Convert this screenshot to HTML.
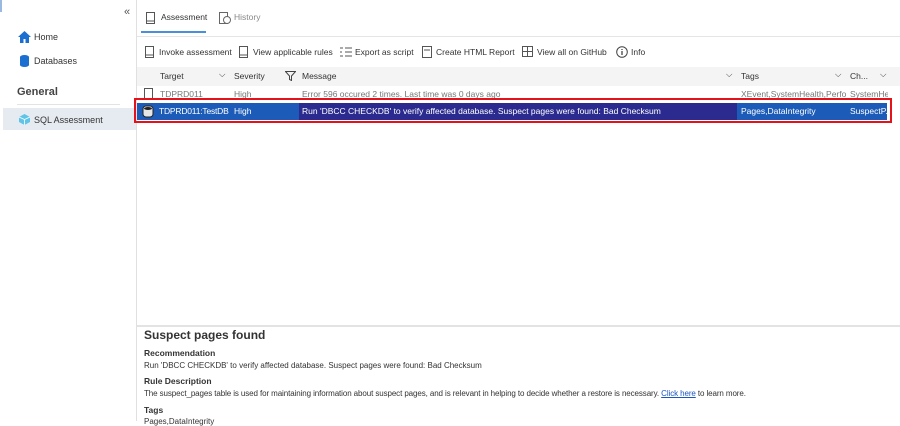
<!DOCTYPE html><html><head><style>
body{margin:0;width:900px;height:421px;overflow:hidden;background:#fff;font-family:"Liberation Sans",sans-serif;font-size:8.5px;color:#333;position:relative}
.a{position:absolute;white-space:nowrap}
.c{overflow:hidden}
</style></head><body>
<div class="a" style="left:0;top:0;width:2px;height:12px;background:#9bb8e0"></div>
<div class="a" style="left:136px;top:0;width:1px;height:421px;background:#e0e0e0"></div>
<div class="a" style="left:124px;top:6px;font-size:11px;color:#555">«</div>
<svg class="a" style="left:18px;top:31px" width="13" height="12" viewBox="0 0 13 12"><path d="M6.5 0L0 6h2v6h3.5V8h2v4H11V6h2z" fill="#1a6fd1"/></svg>
<div class="a" style="left:34px;top:32px;font-size:9px">Home</div>
<svg class="a" style="left:20px;top:55px" width="9" height="12" viewBox="0 0 9 12"><ellipse cx="4.5" cy="2" rx="4.5" ry="2" fill="#1a6fd1"/><rect x="0" y="2" width="9" height="8" fill="#1a6fd1"/><ellipse cx="4.5" cy="10" rx="4.5" ry="2" fill="#1a6fd1"/></svg>
<div class="a" style="left:34px;top:56px;font-size:9px">Databases</div>
<div class="a" style="left:17px;top:86px;font-size:11px;font-weight:bold;color:#444">General</div>
<div class="a" style="left:17px;top:104px;width:103px;height:1px;background:#e3e3e3"></div>
<div class="a" style="left:3px;top:108px;width:133px;height:22px;background:#e6ebf1"></div>
<svg class="a" style="left:19px;top:114px" width="11" height="11" viewBox="0 0 11 11"><path d="M5.5 0L11 3v5L5.5 11 0 8V3z" fill="#5fc4e8"/><path d="M5.5 5.5L11 3M5.5 5.5V11M5.5 5.5L0 3" stroke="#fff" stroke-width=".8"/></svg>
<div class="a" style="left:34px;top:115px;font-size:9px">SQL Assessment</div>

<svg class="a" style="left:146px;top:12px" width="9" height="12"><rect x=".5" y=".5" width="8" height="11" fill="none" stroke="#555"/><line x1="1" y1="9" x2="8" y2="9" stroke="#555"/></svg>
<div class="a" style="left:161px;top:12px">Assessment</div>
<div class="a" style="left:141px;top:31px;width:65px;height:2px;background:#4a90d9"></div>
<svg class="a" style="left:219px;top:12px" width="12" height="12"><rect x=".5" y=".5" width="8" height="11" fill="none" stroke="#666"/><circle cx="8" cy="8" r="3.5" fill="#fff" stroke="#666"/></svg>
<div class="a" style="left:234px;top:12px;color:#888">History</div>
<div class="a" style="left:137px;top:36px;width:763px;height:1px;background:#e5e5e5"></div>

<svg class="a" style="left:145px;top:46px" width="9" height="12"><rect x=".5" y=".5" width="8" height="11" fill="none" stroke="#555"/><line x1="1" y1="9" x2="8" y2="9" stroke="#555"/></svg>
<div class="a" style="left:159px;top:47px">Invoke assessment</div>
<svg class="a" style="left:239px;top:46px" width="9" height="12"><rect x=".5" y=".5" width="8" height="11" fill="none" stroke="#555"/><line x1="1" y1="9" x2="8" y2="9" stroke="#555"/></svg>
<div class="a" style="left:253px;top:47px">View applicable rules</div>
<svg class="a" style="left:340px;top:47px" width="12" height="10"><path d="M0 1h3M5 1h7M0 5h2M5 5h7M0 9h3M5 9h7" stroke="#555"/></svg>
<div class="a" style="left:355px;top:47px">Export as script</div>
<svg class="a" style="left:422px;top:46px" width="10" height="12"><rect x=".5" y=".5" width="9" height="11" fill="none" stroke="#555"/><line x1="2" y1="4" x2="8" y2="4" stroke="#555"/></svg>
<div class="a" style="left:436px;top:47px">Create HTML Report</div>
<svg class="a" style="left:522px;top:46px" width="11" height="11"><rect x=".5" y=".5" width="10" height="10" fill="none" stroke="#555"/><path d="M5.5 0v11M0 5.5h11" stroke="#555"/></svg>
<div class="a" style="left:537px;top:47px">View all on GitHub</div>
<svg class="a" style="left:616px;top:46px" width="12" height="12"><circle cx="6" cy="6" r="5.3" fill="none" stroke="#444"/><path d="M6 5v4M6 3v1" stroke="#444" stroke-width="1.3"/></svg>
<div class="a" style="left:631px;top:47px">Info</div>

<div class="a" style="left:137px;top:67px;width:763px;height:19px;background:#f4f4f4"></div>
<div class="a" style="left:160px;top:71px">Target</div>
<div class="a" style="left:219px;top:69px">⌵</div>
<div class="a" style="left:234px;top:71px">Severity</div>
<svg class="a" style="left:285px;top:71px" width="11" height="10"><path d="M.5.5h10L6.5 5v4.5l-2-1V5z" fill="none" stroke="#444"/></svg>
<div class="a" style="left:302px;top:71px">Message</div>
<div class="a" style="left:726px;top:69px">⌵</div>
<div class="a" style="left:741px;top:71px">Tags</div>
<div class="a" style="left:835px;top:69px">⌵</div>
<div class="a" style="left:850px;top:71px">Ch...</div>
<div class="a" style="left:880px;top:69px">⌵</div>

<svg class="a" style="left:144px;top:88px" width="9" height="12"><rect x=".5" y=".5" width="8" height="11" fill="none" stroke="#555"/></svg>
<div class="a" style="left:160px;top:89px;color:#777">TDPRD011</div>
<div class="a" style="left:234px;top:89px;color:#777">High</div>
<div class="a" style="left:302px;top:89px;color:#777">Error 596 occured 2 times. Last time was 0 days ago</div>
<div class="a c" style="left:741px;top:89px;width:105px;color:#777">XEvent,SystemHealth,Perfor...</div>
<div class="a c" style="left:850px;top:89px;width:38px;color:#777">SystemHe...</div>

<div class="a" style="left:134px;top:98px;width:754px;height:21px;border:2px solid #e3121b"></div>
<div class="a" style="left:137px;top:103px;width:750px;height:17px;background:#1c5cb8"></div>
<div class="a" style="left:299px;top:103px;width:438px;height:17px;background:#2b2b8f"></div>
<svg class="a" style="left:142px;top:105px" width="12" height="13"><rect x="1" y="1" width="10" height="11" rx="3" fill="#e6e6e6" stroke="#222"/><ellipse cx="6" cy="3.5" rx="4" ry="1.5" fill="#222"/></svg>
<div class="a c" style="left:159px;top:106px;width:72px;color:#fff;letter-spacing:-0.2px">TDPRD011:TestDB</div>
<div class="a" style="left:234px;top:106px;color:#fff">High</div>
<div class="a" style="left:302px;top:106px;color:#fff">Run 'DBCC CHECKDB' to verify affected database. Suspect pages were found: Bad Checksum</div>
<div class="a" style="left:741px;top:106px;color:#fff">Pages,DataIntegrity</div>
<div class="a c" style="left:850px;top:106px;width:38px;color:#fff">SuspectP...</div>

<div class="a" style="left:137px;top:325px;width:763px;height:2px;background:#e3e3e3"></div>
<div class="a" style="left:144px;top:328px;font-size:12px;font-weight:bold;color:#333">Suspect pages found</div>
<div class="a" style="left:144px;top:348px;font-weight:bold">Recommendation</div>
<div class="a" style="left:144px;top:361px;font-size:8px">Run 'DBCC CHECKDB' to verify affected database. Suspect pages were found: Bad Checksum</div>
<div class="a" style="left:144px;top:376px;font-weight:bold">Rule Description</div>
<div class="a" style="left:144px;top:389px;font-size:8px;letter-spacing:-0.1px">The suspect_pages table is used for maintaining information about suspect pages, and is relevant in helping to decide whether a restore is necessary. <span style="color:#1a55c0;text-decoration:underline">Click here</span> to learn more.</div>
<div class="a" style="left:144px;top:405px;font-weight:bold">Tags</div>
<div class="a" style="left:144px;top:417px;font-size:8px">Pages,DataIntegrity</div>
</body></html>
